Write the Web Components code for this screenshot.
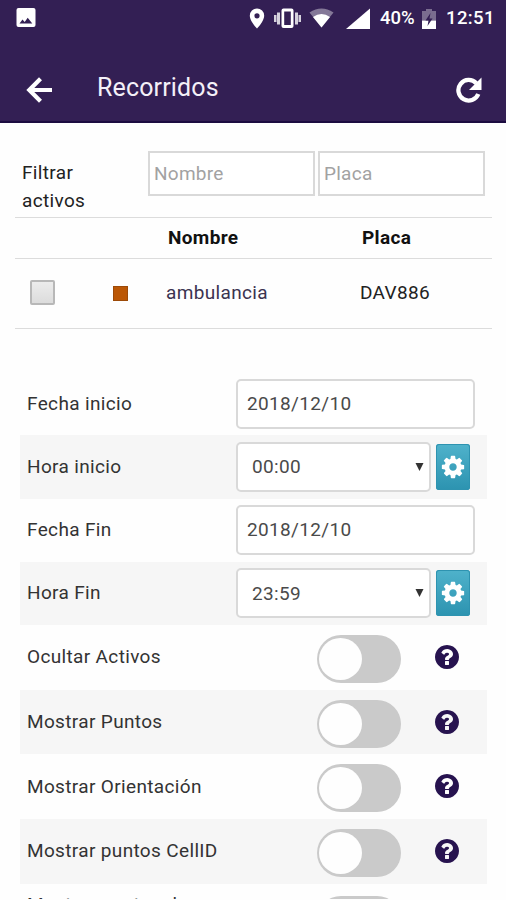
<!DOCTYPE html>
<html lang="es">
<head>
<meta charset="utf-8">
<title>Recorridos</title>
<style>
  body {
    margin: 0;
    height: 900px;
    overflow: hidden;
    background: #fefefe;
    color: #333;
    font-family: Roboto, "Liberation Sans", sans-serif;
    font-size: 19px;
    letter-spacing: 0.35px;
  }
</style>
</head>
<body>
<status-bar battery="40%" time="12:51"></status-bar>
<app-header>Recorridos</app-header>
<asset-table>
  <span slot="label">Filtrar activos</span>
  <span slot="name">ambulancia</span>
  <span slot="plate">DAV886</span>
</asset-table>
<main>
  <form-row>Fecha inicio<text-field slot="control">2018/12/10</text-field></form-row>
  <form-row striped>Hora inicio<time-select slot="control">00:00</time-select></form-row>
  <form-row>Fecha Fin<text-field slot="control">2018/12/10</text-field></form-row>
  <form-row striped>Hora Fin<time-select slot="control">23:59</time-select></form-row>
  <form-row option>Ocultar Activos<toggle-option slot="control"></toggle-option></form-row>
  <form-row option striped>Mostrar Puntos<toggle-option slot="control"></toggle-option></form-row>
  <form-row option>Mostrar Orientación<toggle-option slot="control"></toggle-option></form-row>
  <form-row option striped>Mostrar puntos CellID<toggle-option slot="control"></toggle-option></form-row>
  <form-row option last>Mostrar puntos de<toggle-option slot="control"></toggle-option></form-row>
</main>

<script>
// small helper, every component only needs a shadow root with its markup
class BaseElement extends HTMLElement {
  constructor() {
    super();
    this.shadow = this.attachShadow({ mode: 'open' });
    this.shadow.innerHTML = this.template();
  }
  template() {
    return '';
  }
}

class StatusBar extends BaseElement {
  template() {
    return `
      <style>
        :host {
          display: flex;
          align-items: center;
          height: 36px;
          box-sizing: border-box;
          padding: 0 11px 0 16px;
          background: #331f54;
          color: #fff;
          font-size: 18.5px;
          font-weight: 500;
        }
        svg { display: block; fill: #fff; flex: none; }
        .picture { margin-right: auto; }
        .pin { margin-right: 9px; }
        .vibrate { margin-right: 8px; }
        .wifi { margin-right: 12px; }
        .signal { margin-right: 10px; }
        .charge { margin: 0 10px 0 6px; }
        .battery { letter-spacing: 0; width: 36px; white-space: nowrap; }
        .time { letter-spacing: 0.4px; width: 49px; white-space: nowrap; }
      </style>
      <svg class="picture" width="20" height="20" viewBox="0 0 20 20">
        <rect x="0.5" y="0" width="19" height="19" rx="2"/>
        <path d="M3.5 15.5l3-4 2.2 2.6 3-4.4 4.600 5.800z" fill="#331f54"/>
      </svg>
      <svg class="pin" width="16" height="21" viewBox="0 0 16 21">
        <path fill-rule="evenodd" d="M8 0.500a7.200 7.200 0 0 0-7.200 7.200C.8 13 8 20.500 8 20.500S15.200 13 15.200 7.700A7.200 7.200 0 0 0 8 .5zm0 4.700a2.600 2.600 0 1 1 0 5.200 2.600 2.600 0 0 1 0-5.200z"/>
      </svg>
      <svg class="vibrate" width="27" height="20" viewBox="0 0 27 20">
        <path d="M0 7h2.500v7H0zM3 4.500h3v12H3zM21 4.500h3v12h-3zM24.500 7H27v7h-2.500z" opacity=".8"/>
        <path fill-rule="evenodd" d="M9.500 0.500h8q2 0 2 2v15.500q0 2-2 2h-8q-2 0-2-2V2.500q0-2 2-2zm.7 3v13.500h6.600V3.500z"/>
      </svg>
      <svg class="wifi" width="25" height="20" viewBox="0 0 25 20">
        <path d="M12.500 19.500L.5 4.500q12-8 24 0z" opacity=".4"/>
        <path d="M12.500 19.500L4 9q8.500-6 17 0z"/>
      </svg>
      <svg class="signal" width="24" height="21" viewBox="0 0 24 21"><path d="M0 21L24 .5V21z"/></svg>
      <span class="battery"></span>
      <svg class="charge" width="14" height="21" viewBox="0 0 14 21">
        <path d="M0 3h4V1h6v2h4v9.500H0z" opacity=".35"/>
        <path d="M0 12.500h14V21H0z"/>
        <path d="M8.500 5L3.500 12.500h3L5.500 18l5-7.500h-3z" fill="#331f54"/>
      </svg>
      <span class="time"></span>
    `;
  }
  connectedCallback() {
    this.shadow.querySelector('.battery').textContent = this.getAttribute('battery');
    this.shadow.querySelector('.time').textContent = this.getAttribute('time');
  }
}

class AppHeader extends BaseElement {
  template() {
    return `
      <style>
        :host {
          display: flex;
          align-items: center;
          height: 87px;
          box-sizing: border-box;
          padding: 23px 24px 0 26px;
          background: #331f54;
          border-bottom: 2px solid #1c0c40;
          color: #f4f0f8;
          font-size: 25px;
          letter-spacing: 0.15px;
        }
        svg { display: block; flex: none; }
        .title { flex: 1; margin: -5px 0 0 45px; }
      </style>
      <svg width="26" height="26" viewBox="0 0 26 26" fill="none" stroke="#fff" stroke-width="4.200">
        <path d="M26 13H4M14.500 1.800L3.300 13l11.200 11.200"/>
      </svg>
      <span class="title"><slot></slot></span>
      <svg width="26" height="26" viewBox="0 0 26 26">
        <path d="M20.300 6.300A10.300 10.300 0 1 0 22.300 17" fill="none" stroke="#fff" stroke-width="4.300"/>
        <path d="M25.500 0.500V13H13z" fill="#fff"/>
      </svg>
    `;
  }
}

class AssetTable extends BaseElement {
  template() {
    return `
      <style>
        :host {
          display: block;
          margin: 28px 14px 43px 15px;
          color: #222;
        }
        .filter {
          display: flex;
          align-items: flex-start;
          height: 66px;
          padding-left: 7px;
        }
        .label { width: 90px; margin: 8px 36px 0 0; line-height: 28px; }
        .input {
          width: 167px;
          height: 45px;
          box-sizing: border-box;
          border: 2px solid #d9d9d9;
          padding-left: 4px;
          margin-right: 3px;
          line-height: 41px;
          letter-spacing: 0.25px;
          color: #a2a2a2;
          background: #fff;
        }
        .row {
          display: grid;
          grid-template-columns: 82px 69px 194px 1fr;
          align-items: center;
          border-top: 1px solid #dcdcdc;
          height: 40px;
        }
        .head { font-weight: 700; color: #111; }
        .head span { padding-left: 2px; margin-top: -1px; }
        .body { height: 69px; border-bottom: 1px solid #dcdcdc; }
        .check {
          width: 25px;
          height: 25px;
          box-sizing: border-box;
          margin: -2px 0 0 15px;
          border: 2px solid #b8b8b8;
          border-radius: 2px;
          background: linear-gradient(#ececec, #dcdcdc);
        }
        .swatch {
          width: 15px;
          height: 15px;
          box-sizing: border-box;
          margin-left: 16px;
          border: 1px solid #9c4a08;
          background: #bb5705;
        }
        .text { margin-top: -2px; }
        .name { color: #3b3350; }
      </style>
      <div class="filter">
        <div class="label"><slot name="label"></slot></div>
        <div class="input">Nombre</div>
        <div class="input">Placa</div>
      </div>
      <div class="row head"><i></i><i></i><span>Nombre</span><span>Placa</span></div>
      <div class="row body">
        <div class="check"></div>
        <div class="swatch"></div>
        <div class="text name"><slot name="name"></slot></div>
        <div class="text"><slot name="plate"></slot></div>
      </div>
    `;
  }
}

class FormRow extends BaseElement {
  template() {
    return `
      <style>
        :host {
          display: flex;
          align-items: center;
          height: 63.250px;
          box-sizing: border-box;
          margin: 0 19px 0 20px;
          padding-left: 7px;
        }
        :host([option]) { height: 64.700px; }
        :host([striped]) { background: #f6f6f6; }
        /* the last row is only partly scrolled into view */
        :host([last]) { align-items: flex-start; height: 15px; overflow: hidden; }
        .label { width: 209px; flex: none; white-space: nowrap; margin-top: -1px; }
        :host([last]) .label { padding-top: 10px; }
        :host([last]) ::slotted(*) { margin-top: 9px; }
      </style>
      <div class="label"><slot></slot></div>
      <slot name="control"></slot>
    `;
  }
}

class TextField extends BaseElement {
  template() {
    return `
      <style>
        :host {
          display: block;
          width: 239px;
          height: 50px;
          box-sizing: border-box;
          border: 2px solid #d9d9d9;
          border-radius: 5px;
          padding-left: 9px;
          line-height: 46px;
          color: #4a4a4a;
          background: #fff;
        }
      </style>
      <slot></slot>
    `;
  }
}

class TimeSelect extends BaseElement {
  template() {
    return `
      <style>
        :host { display: flex; align-items: center; }
        .select {
          display: flex;
          align-items: center;
          justify-content: space-between;
          width: 195px;
          height: 50px;
          box-sizing: border-box;
          border: 2px solid #d9d9d9;
          border-radius: 5px;
          padding: 0 5px 0 14px;
          color: #4a4a4a;
          background: #fff;
        }
        .settings {
          display: flex;
          align-items: center;
          justify-content: center;
          width: 34px;
          height: 46px;
          margin-left: 5px;
          border-radius: 3px;
          background: linear-gradient(#4fb2cb, #2c93b0);
          box-shadow: inset 0 0 0 1px #2e93b0;
        }
        svg { display: block; }
      </style>
      <div class="select">
        <span><slot></slot></span>
        <svg width="9" height="10" viewBox="0 0 9 10"><path d="M0.500 1h8L4.500 9z" fill="#333"/></svg>
      </div>
      <div class="settings">
        <svg width="26" height="26" viewBox="0 0 1792 1792" fill="#fff">
          <path d="M1152 896q0-106-75-181t-181-75-181 75-75 181 75 181 181 75 181-75 75-181zm512-109v222q0 12-8 23t-20 13l-185 28q-19 54-39 91 35 50 107 138 10 12 10 25t-9 23q-27 37-99 108t-94 71q-12 0-26-9l-138-108q-44 23-91 38-16 136-29 186-7 28-36 28h-222q-14 0-24.500-8.500t-11.500-21.500l-28-184q-49-16-90-37l-141 107q-10 9-25 9-14 0-25-11-126-114-165-168-7-10-7-23 0-12 8-23 15-21 51-66.500t54-70.500q-27-50-41-99l-183-27q-13-2-21-12.500t-8-23.500v-222q0-12 8-23t19-13l186-28q14-46 39-92-40-57-107-138-10-12-10-24 0-10 9-23 26-36 98.500-107.500t94.500-71.500q13 0 26 10l138 107q44-23 91-38 16-136 29-186 7-28 36-28h222q14 0 24.500 8.500t11.500 21.500l28 184q49 16 90 37l142-107q9-9 24-9 13 0 25 10 129 119 165 170 7 8 7 22 0 12-8 23-15 21-51 66.500t-54 70.500q26 50 41 98l183 28q13 2 21 12.500t8 23.500z"/>
        </svg>
      </div>
    `;
  }
}

class ToggleOption extends BaseElement {
  template() {
    return `
      <style>
        :host { display: flex; align-items: center; padding-left: 81px; }
        .track {
          width: 84px;
          height: 48px;
          box-sizing: border-box;
          margin-top: 3px;
          padding: 3px 2px;
          border-radius: 24px;
          background: #cacaca;
        }
        .knob { width: 43px; height: 42px; border-radius: 50%; background: #fefefe; }
        svg { display: block; margin: 0 0 1px 32px; }
      </style>
      <div class="track"><div class="knob"></div></div>
      <svg width="28" height="28" viewBox="0 0 1792 1792" fill="#27134f">
        <path d="M1024 1376v-192q0-14-9-23t-23-9h-192q-14 0-23 9t-9 23v192q0 14 9 23t23 9h192q14 0 23-9t9-23zm256-672q0-88-55.500-163t-138.500-116-170-41q-243 0-371 213-15 24 8 42l132 100q7 6 19 6 16 0 25-12 53-68 86-92 34-24 86-24 48 0 85.500 26t37.500 59q0 38-20 61t-68 45q-63 28-115.500 86.500t-52.500 125.500v36q0 14 9 23t23 9h192q14 0 23-9t9-23q0-19 21.500-49.500t54.500-49.500q32-18 49-28.500t46-35 44.500-48 28-60.500 12.500-81zm384 192q0 209-103 385.500t-279.500 279.500-385.500 103-385.500-103-279.500-279.500-103-385.500 103-385.500 279.500-279.500 385.500-103 385.500 103 279.500 279.500 103 385.500z"/>
      </svg>
    `;
  }
}

// register components
customElements.define('status-bar', StatusBar);
customElements.define('app-header', AppHeader);
customElements.define('asset-table', AssetTable);
customElements.define('form-row', FormRow);
customElements.define('text-field', TextField);
customElements.define('time-select', TimeSelect);
customElements.define('toggle-option', ToggleOption);
</script>
</body>
</html>
